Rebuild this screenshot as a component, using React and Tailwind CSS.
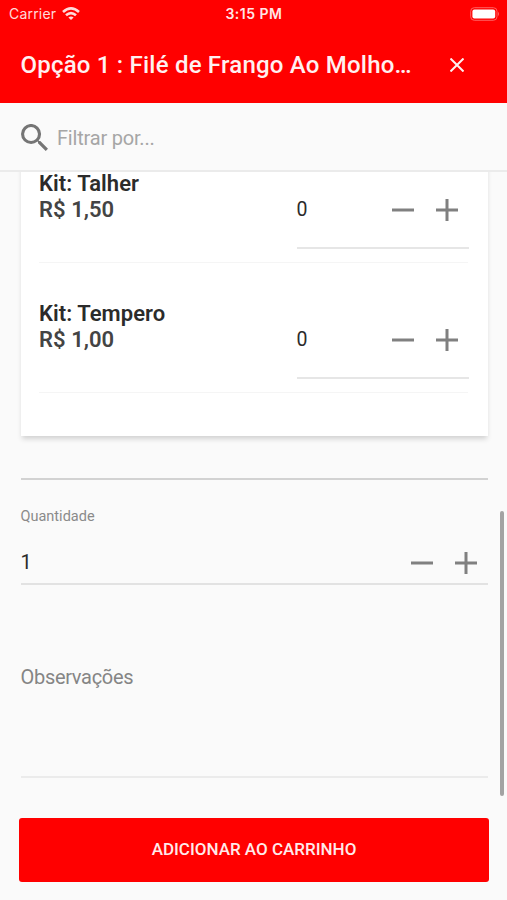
import React from "react";

function Glyph({ d, size, className }) {
  return (
    <svg width={size} height={size} viewBox="0 0 24 24" fill="currentColor" className={className}>
      <path d={d} />
    </svg>
  );
}

function Stepper() {
  return (
    <div className="flex shrink-0 gap-[22px] text-[#808080]">
      <svg width="22" height="22" viewBox="0 0 22 22" aria-label="Diminuir">
        <path d="M0 11H22" stroke="currentColor" strokeWidth="3" />
      </svg>
      <svg width="22" height="22" viewBox="0 0 22 22" aria-label="Aumentar">
        <path d="M0 11H22M11 0V22" stroke="currentColor" strokeWidth="3" />
      </svg>
    </div>
  );
}

function KitItem({ name, price }) {
  return (
    <div className="flex h-[130px] justify-between border-b border-[#f5f5f5]">
      <div className="pt-[38px] text-[22px] leading-[26px] font-semibold tracking-[0.04px]">
        <div className="text-[#2b2b2b]">{name}</div>
        <div className="text-[#444444]">{price}</div>
      </div>
      <div className="-mr-px flex h-[116px] w-[172.5px] items-center justify-between border-b-2 border-[#e6e6e6] pt-[39px] pr-[11.5px]">
        <span className="text-[19.5px] leading-7 text-[#2b2b2b]">0</span>
        <Stepper />
      </div>
    </div>
  );
}

export default function App() {
  return (
    <div className="relative flex h-[900px] w-[507px] flex-col overflow-hidden bg-[#fafafa] font-['Roboto',sans-serif]">
      <header className="h-[103px] shrink-0 bg-[#ff0000] text-white">
        <div className="grid h-[28px] grid-cols-3 items-center pr-[7px] pl-[9px] font-['Inter',sans-serif]">
          <div className="-mt-px flex items-center gap-[6px] opacity-85">
            <span className="text-[14px] tracking-[0.2px]">Carrier</span>
            <svg width="18" height="14" viewBox="0 0 18 14" fill="none" stroke="white" strokeWidth="2.6">
              <path d="M1 5Q9-2.2 17 5" />
              <path d="M4 8.3Q9 3.8 14 8.3" />
              <path d="M6.4 10.5Q9 8.3 11.6 10.5L9 13Z" fill="white" stroke="none" />
            </svg>
          </div>
          <div className="-mt-px -ml-px text-center text-[14px] font-semibold tracking-[0.5px] whitespace-nowrap opacity-90">3:15 PM</div>
          <svg className="-mt-px justify-self-end" width="30" height="14" viewBox="0 0 30 14">
            <rect x="0.7" y="0.7" width="26.3" height="12.6" rx="3.6" fill="none" stroke="#ff6060" />
            <rect x="2.4" y="2.5" width="22.8" height="9" rx="2" fill="white" />
            <path d="M28 4.8Q30 7 28 9.2Z" fill="#ff6060" />
          </svg>
        </div>
        <div className="flex h-[75px] items-center justify-between pr-[43px] pl-[20.5px]">
          <h1 className="-mt-[2px] text-[24px] leading-7 font-medium tracking-[0.21px] whitespace-nowrap text-[#fff0f0]">
            Opção 1 : Filé de Frango Ao Molho…
          </h1>
          <svg className="-mt-[2px]" width="14" height="14" viewBox="0 0 14 14" stroke="#fff0f0" strokeWidth="2">
            <path d="M0.5 0.5L13.5 13.5M13.5 0.5L0.5 13.5" />
          </svg>
        </div>
      </header>

      <div className="z-10 flex h-[69px] shrink-0 items-center gap-[9px] border-b-2 border-[#ebebeb] bg-[#fafafa] pt-[2px] pl-[21px]">
        <Glyph
          size={27}
          className="text-[#757575]"
          d="M17.15 15.09h-1.09l-.38-.37a8.9 8.9 0 0 0 2.17-5.84A8.92 8.92 0 1 0 8.92 17.8a8.9 8.9 0 0 0 5.8-2.16l.38.38v1.08L21.96 24 24 21.95zm-8.23 0a6.17 6.17 0 1 1 0-12.34 6.17 6.17 0 0 1 0 12.34z"
        />
        <span className="text-[20px] tracking-[-0.2px] text-[#a6a6a6]">Filtrar por...</span>
      </div>

      <main className="flex flex-col pr-[19px] pl-[20.5px]">
        <section className="-mt-[38.6px] h-[302.6px] bg-white pr-[20px] pl-[18.5px] shadow-[0_4px_5px_-1px_rgba(0,0,0,0.16)]">
          <KitItem name="Kit: Talher" price="R$ 1,50" />
          <KitItem name="Kit: Tempero" price="R$ 1,00" />
        </section>

        <hr className="mt-[42px] border-t-2 border-[#d2d2d2]" />

        <div className="flex h-[105px] flex-col border-b-2 border-[#e2e2e2] pt-[27px]">
          <label className="text-[14.5px] leading-5 text-[#8a8a8a]">Quantidade</label>
          <div className="mt-[16px] flex h-[40px] items-center justify-between pr-[11.5px]">
            <span className="pb-[2px] text-[20px] text-[#2b2b2b]">1</span>
            <Stepper />
          </div>
        </div>

        <div className="h-[193px] border-b-2 border-[#ebebeb] pt-[78px] text-[20px] leading-7 tracking-[-0.3px] text-[#858585]">
          Observações
        </div>

        <button className="-mr-px -ml-[1.5px] mt-[40px] h-[64px] rounded-[3px] bg-[#ff0000] text-[17px] font-medium text-[#ffeaea]">
          ADICIONAR AO CARRINHO
        </button>
      </main>

      <div className="absolute top-[511px] right-[3px] h-[285px] w-1 rounded-sm bg-[#a3a3a3]" />
    </div>
  );
}
